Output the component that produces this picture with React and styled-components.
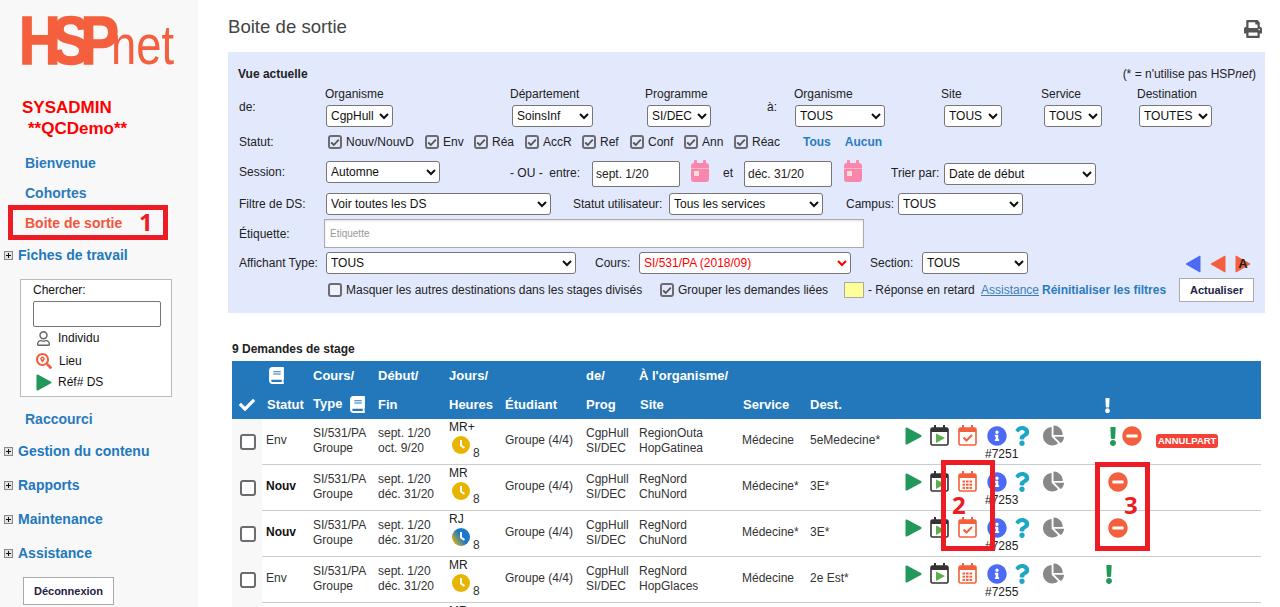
import React from 'react';
import styled, { createGlobalStyle } from 'styled-components';
import { FaPrint, FaBook, FaCheck, FaInfoCircle, FaQuestion, FaChartPie, FaMinusCircle, FaExclamation, FaRegUser, FaSearchLocation } from 'react-icons/fa';

const Global = createGlobalStyle`
  html, body { margin: 0; padding: 0; height: 100%; overflow: hidden; background: #fff; }
  body { font-family: "Liberation Sans", Arial, sans-serif; font-size: 12px; color: #222; }
  * { box-sizing: border-box; }
`;
const Page = styled.div`position: relative; display: flex; width: 1280px; height: 607px; overflow: hidden;`;

/* Sidebar */
const Sidebar = styled.aside`flex: none; width: 198px; height: 607px; background: #f8f8f8; display: flex; flex-direction: column;`;
const LogoSvg = styled.svg`display: block; flex: none; width: 198px; height: 97px;`;
const UserLine = styled.div`font-size: 17px; font-weight: 700; color: #f00; line-height: 21px; white-space: pre; padding-left: ${p => p.$pl}px;`;
const NavList = styled.nav`display: flex; flex-direction: column; margin-top: 9px;`;
const NavLink = styled.a`display: block; height: 30px; line-height: 30px; padding-left: 25px; font-size: 14px; font-weight: 700; color: ${p => p.$active ? '#f4553a' : '#2a7bbd'};`;
const NavGroup = styled.a`display: flex; align-items: center; height: 34px; padding-left: 4px; font-size: 14px; font-weight: 700; color: #2378bd;`;
const PlusBox = styled.span`position: relative; flex: none; width: 9px; height: 9px; margin-right: 5px; border: 1px solid #888; background: #e4e4e4;
  &::before { content: ''; position: absolute; left: 1px; right: 1px; top: 3px; height: 1px; background: #111; }
  &::after { content: ''; position: absolute; top: 1px; bottom: 1px; left: 3px; width: 1px; background: #111; }`;
const SearchBox = styled.div`width: 152px; height: 118px; margin: 7px 0 7px 20px; background: #fff; border: 1px solid #bbb; padding: 3px 0 0 12px; color: #111;`;
const SearchTitle = styled.div`line-height: 14px;`;
const SearchInput = styled.input`display: block; width: 128px; height: 26px; margin: 4px 0 0; border: 1px solid #767676; border-radius: 2px; background: #fff;`;
const SearchRow = styled.div`display: flex; align-items: center; height: ${p => p.$h}px; margin-top: ${p => p.$mt || 0}px; padding-left: 3px; svg { flex: none; } span { margin-left: ${p => p.$gap}px; }`;
const Logout = styled.button`flex: none; width: 91px; height: 28px; margin: 7px 0 0 23px; padding: 0; background: #fff; border: 1px solid #aaa; font: 700 11px "Liberation Sans", Arial, sans-serif; color: #224;`;

/* Main */
const Main = styled.main`flex: 1; min-width: 0; padding: 0 15px 0 30px;`;
const TitleBar = styled.header`display: flex; justify-content: space-between; align-items: flex-start; height: 52px;`;
const Title = styled.h1`margin: 16px 0 0; font-size: 18.6px; line-height: 22px; font-weight: 400; color: #444;`;
const PrintBtn = styled.span`margin: 20px 3px 0 0; color: #555; line-height: 0;`;

const Panel = styled.section`height: 261px; padding: 12px 0 0 10px; background: #e3e9fd; color: #222;`;
const Row = styled.div`display: flex; align-items: ${p => p.$align || 'center'}; height: ${p => p.$h}px; margin-top: ${p => p.$mt || 0}px; white-space: nowrap;`;
const Label = styled.span`flex: none; display: block; width: ${p => p.$w ? p.$w + 'px' : 'auto'}; margin-left: ${p => p.$ml || 0}px; line-height: ${p => p.$lh || 22}px; ${p => p.$strong && 'font-weight:700;'}`;
const Note = styled.span`margin-left: auto; margin-right: 9px; font-size: 12px;`;
const Field = styled.div`flex: none; width: ${p => p.$w}px; align-self: flex-start; padding-top: 3px;`;
const FieldLabel = styled.div`line-height: 14px; height: 18px;`;
const Picker = styled.select`flex: none; display: block; width: ${p => p.$w}px; height: 22px; margin-left: ${p => p.$ml || 0}px; margin-top: ${p => p.$mt || 0}px; padding: 0; font: 12px "Liberation Sans", Arial, sans-serif; color: ${p => p.$red ? '#f00' : '#111'}; background: #fff; border: 1px solid #767676; border-radius: 3px;`;
const DateInput = styled.input`flex: none; width: 88px; height: 26px; padding: 0 3px; border: 1px solid #767676; border-radius: 2px; font: 12px "Liberation Sans", Arial, sans-serif; color: #222;`;
const TagInput = styled.input`flex: none; width: 540px; height: 29px; padding: 0 5px; border: 1px solid #aaa; box-shadow: inset 0 1px 2px rgba(0,0,0,.12); font: 10px "Liberation Sans", Arial, sans-serif; &::placeholder { color: #999; }`;
const Tick = styled.span`flex: none; display: inline-flex; align-items: center; justify-content: center; width: ${p => p.$size || 14}px; height: ${p => p.$size || 14}px; border: 2px solid #6c6c70; border-radius: 3px; background: ${p => p.$bg || 'transparent'}; color: #555;`;
const TickItem = styled.label`flex: none; display: flex; align-items: center; width: ${p => p.$w}px; margin-left: ${p => p.$ml || 0}px;`;
const TickText = styled.span`margin-left: 4px;`;
const BlueLink = styled.a`flex: none; font-weight: 700; color: ${p => p.$plain ? '#3a7dba' : '#2a7bbd'}; margin-left: ${p => p.$ml || 0}px; ${p => p.$plain && 'font-weight:400; text-decoration: underline;'}`;
const PinkCal = styled.svg`flex: none; width: 18px; height: 22px; margin: -1px 0 0 ${p => p.$ml}px;`;
const Arrows = styled.div`flex: none; display: flex; gap: 9px; margin-left: 157px; margin-top: 2px; line-height: 0;`;
const Swatch = styled.span`flex: none; width: 20px; height: 16px; background: #ffff99; border: 1px solid #aaa;`;
const Refresh = styled.button`flex: none; width: 75px; height: 24px; margin-left: 13px; padding: 0; background: #fff; border: 1px solid #aaa; font: 700 11px "Liberation Sans", Arial, sans-serif; color: #224;`;

const Count = styled.div`margin: 29px 0 5px 4px; line-height: 14px; font-weight: 700; color: #222;`;
const Table = styled.table`margin-left: 4px; width: 1029px; table-layout: fixed; border-collapse: separate; border-spacing: 0; color: #333;`;
const Th = styled.th`height: 29px; padding: 0; background: #2378bb; color: #fff; font-size: 13px; font-weight: 700; text-align: left; white-space: nowrap; padding-left: ${p => p.$pl || 0}px; svg { vertical-align: middle; }`;
const HeadBook = styled(FaBook)`margin-left: 3px;`;
const BodyRow = styled.tr`height: 46px;`;
const Td = styled.td`padding: 0 0 2px ${p => p.$pl || 0}px; line-height: 14.7px; vertical-align: ${p => p.$top ? 'top' : 'middle'}; border-bottom: 1px solid #ccc; white-space: nowrap; ${p => p.$bold && 'font-weight:700; color:#111;'}`;
const CheckTd = styled.td`padding: 0 0 0 8px; background: #f8f8f8; vertical-align: middle; line-height: 0;`;
const DaysText = styled.div`line-height: 14px; margin-top: 1px; color: #222;`;
const Hours = styled.div`display: flex; align-items: flex-end; margin: 2px 0 0 3px; line-height: 12px; svg { flex: none; margin-right: 3px; } span { margin-bottom: -5px; }`;
const IconRow = styled.div`display: flex; align-items: center; height: 21px; margin-top: 6px; line-height: 0;`;
const Slot = styled.span`flex: none; display: inline-flex; justify-content: flex-start; align-items: center; width: ${p => p.$w}px; color: ${p => p.$c || 'inherit'};`;
const RefNo = styled.div`margin: 1px 0 0 80px; line-height: 14px; color: #222;`;
const WarnRow = styled.div`display: flex; align-items: center; height: 20px; margin-top: 7px; margin-left: ${p => p.$ml}px; line-height: 0;`;
const Badge = styled.span`display: inline-block; height: 14px; padding: 0 2px; background: #f44336; border-radius: 3px; color: #fff; font-size: 9.5px; line-height: 14px; font-weight: 700;`;

/* Annotation overlays */
const Frame = styled.div`position: absolute; left: ${p => p.$x}px; top: ${p => p.$y}px; width: ${p => p.$w}px; height: ${p => p.$h}px; border: 5px solid #ed1c24; pointer-events: none;`;
const Mark = styled.span`position: absolute; left: ${p => p.$x}px; top: ${p => p.$y}px; font: 700 24px/26px "Open Sans", sans-serif; color: #ed1c24;`;

const TickIcon = () => (
  <svg width="10" height="9" viewBox="0 0 10 9"><path d="M1.2 4.5 L3.8 7 L8.8 1.6" fill="none" stroke="#555" strokeWidth="1.8" /></svg>
);
const Checked = ({ label, w }) => <TickItem $w={w}><Tick><TickIcon /></Tick><TickText>{label}</TickText></TickItem>;

const Triangle = ({ w = 17, h = 18 }) => (
  <svg width={w} height={h} viewBox="0 0 17 18"><path d="M1.5 1.5 L15.5 9 L1.5 16.5 Z" fill="#22995a" stroke="#22995a" strokeWidth="2" strokeLinejoin="round" /></svg>
);

const Cal = ({ kind }) => {
  const c = kind === 'play' ? '#333' : '#f4603e';
  return (
    <svg width="19" height="21" viewBox="0 0 19 21">
      <rect x="1" y="3" width="17" height="17" rx="1.5" fill="#fff" stroke={c} strokeWidth="1.6" />
      <rect x="1" y="3" width="17" height="4" fill={c} />
      <rect x="4" y="0" width="2" height="4" fill={c} />
      <rect x="13" y="0" width="2" height="4" fill={c} />
      {kind === 'play' && <path d="M6 8.5 L15 13 L6 18 Z" fill="#5cb04a" />}
      {kind === 'check' && <path d="M5.5 12.5 L8.5 15.5 L14 10" fill="none" stroke={c} strokeWidth="2" />}
      {kind === 'grid' && [9.5, 12.7, 15.9].map(y => [4.5, 8, 11.5].map(x => <rect key={x + '-' + y} x={x} y={y} width="2.6" height="2" fill={c} />))}
    </svg>
  );
};

const Clock = ({ blue, id }) => (
  <svg width="18" height="18" viewBox="0 0 18 18">
    {blue && <defs><linearGradient id={id} x1="0" y1="1" x2="1" y2="0.3"><stop offset="0.1" stopColor="#e9b400" /><stop offset="0.6" stopColor="#1c78c8" /></linearGradient></defs>}
    <circle cx="9" cy="9" r="9" fill={blue ? `url(#${id})` : '#e9b400'} />
    <path d="M9 4 V9.5 L12.5 12" fill="none" stroke="#fff" strokeWidth="2" />
  </svg>
);

const TriLeft = ({ c }) => (
  <svg width="16" height="18" viewBox="0 0 16 18"><path d="M15 1 V17 L1 9 Z" fill={c} stroke={c} strokeWidth="1" strokeLinejoin="round" /></svg>
);
const TriA = () => (
  <svg width="16" height="18" viewBox="0 0 16 18">
    <path d="M1 1 V17 L15 9 Z" fill="#f4603e" stroke="#f4603e" strokeWidth="1" strokeLinejoin="round" />
    <text x="8" y="13" textAnchor="middle" fontFamily="Liberation Sans" fontWeight="700" fontSize="13" fill="#222">A</text>
  </svg>
);
const PinkIcon = ({ ml }) => (
  <PinkCal $ml={ml} viewBox="0 0 18 22">
    <rect x="0" y="3" width="18" height="19" rx="3" fill="#f986ad" />
    <rect x="3" y="0" width="3" height="5" rx="1" fill="#f986ad" />
    <rect x="12" y="0" width="3" height="5" rx="1" fill="#f986ad" />
    <rect x="0" y="8" width="18" height="1" fill="#fbb" />
    <rect x="3" y="11" width="5" height="5" fill="#fdd" />
  </PinkCal>
);

const rows = [
  { st: 'Env', d: ['sept. 1/20', 'oct. 9/20'], days: 'MR+', site: ['RegionOuta', 'HopGatinea'], sv: 'Médecine', dest: '5eMedecine*', cal: 'check', ref: '#7251', warn: ['bang', 'minus'], badge: true },
  { st: 'Nouv', b: true, d: ['sept. 1/20', 'déc. 31/20'], days: 'MR', site: ['RegNord', 'ChuNord'], sv: 'Médecine*', dest: '3E*', cal: 'grid', ref: '#7253', warn: ['minus'] },
  { st: 'Nouv', b: true, d: ['sept. 1/20', 'déc. 31/20'], days: 'RJ', blue: true, site: ['RegNord', 'ChuNord'], sv: 'Médecine*', dest: '3E*', cal: 'check', ref: '#7285', warn: ['minus'] },
  { st: 'Env', d: ['sept. 1/20', 'déc. 31/20'], days: 'MR', site: ['RegNord', 'HopGlaces'], sv: 'Médecine', dest: '2e Est*', cal: 'grid', ref: '#7255', warn: ['bang'] },
];
const widths = [30, 51, 65, 71, 56, 81, 53, 103, 68, 95, 195, 56, 105];
const Two = ({ a, b }) => <>{a}<br />{b}</>;

export default function App() {
  return (
    <Page>
      <Global />
      <Sidebar>
        <LogoSvg viewBox="0 0 198 97">
          <text transform="translate(19 64) scale(.85 1)" fontFamily="Liberation Sans" fontWeight="700" fontSize="68" letterSpacing="-11" fill="#f4603e" stroke="#f4603e" strokeWidth="1.5">HSP</text>
          <text x="111" y="64" fontFamily="Liberation Sans" fontSize="56" fill="#f4603e" textLength="63" lengthAdjust="spacingAndGlyphs">net</text>
        </LogoSvg>
        <UserLine $pl={22}>SYSADMIN</UserLine>
        <UserLine $pl={28}>**QCDemo**</UserLine>
        <NavList>
          <NavLink>Bienvenue</NavLink>
          <NavLink>Cohortes</NavLink>
          <NavLink $active>Boite de sortie</NavLink>
          <NavGroup><PlusBox />Fiches de travail</NavGroup>
          <SearchBox>
            <SearchTitle>Chercher:</SearchTitle>
            <SearchInput />
            <SearchRow $h={20} $mt={1} $gap={7}><FaRegUser size={15} color="#666" /><span>Individu</span></SearchRow>
            <SearchRow $h={26} $gap={7}><FaSearchLocation size={16} color="#f4603e" /><span>Lieu</span></SearchRow>
            <SearchRow $h={16} $gap={6}><Triangle w={16} h={17} /><span>Réf# DS</span></SearchRow>
          </SearchBox>
          <NavLink>Raccourci</NavLink>
          <NavGroup><PlusBox />Gestion du contenu</NavGroup>
          <NavGroup><PlusBox />Rapports</NavGroup>
          <NavGroup><PlusBox />Maintenance</NavGroup>
          <NavGroup><PlusBox />Assistance</NavGroup>
        </NavList>
        <Logout>Déconnexion</Logout>
      </Sidebar>

      <Main>
        <TitleBar>
          <Title>Boite de sortie</Title>
          <PrintBtn><FaPrint size={18} /></PrintBtn>
        </TitleBar>

        <Panel>
          <Row $h={20}>
            <Label $strong>Vue actuelle</Label>
            <Note>(* = n'utilise pas HSP<i>net</i>)</Note>
          </Row>
          <Row $h={46}>
            <Label $ml={1} $w={86}>de:</Label>
            <Field $w={185}><FieldLabel>Organisme</FieldLabel><Picker $w={67} $ml={1}><option>CgpHull</option></Picker></Field>
            <Field $w={135}><FieldLabel>Département</FieldLabel><Picker $w={81} $ml={2}><option>SoinsInf</option></Picker></Field>
            <Field $w={122}><FieldLabel>Programme</FieldLabel><Picker $w={64} $ml={2}><option>SI/DEC</option></Picker></Field>
            <Label $w={27}>à:</Label>
            <Field $w={147}><FieldLabel>Organisme</FieldLabel><Picker $w={90} $ml={1}><option>TOUS</option></Picker></Field>
            <Field $w={100}><FieldLabel>Site</FieldLabel><Picker $w={58} $ml={3}><option>TOUS</option></Picker></Field>
            <Field $w={96}><FieldLabel>Service</FieldLabel><Picker $w={58} $ml={3}><option>TOUS</option></Picker></Field>
            <Field $w={90}><FieldLabel>Destination</FieldLabel><Picker $w={73} $ml={2}><option>TOUTES</option></Picker></Field>
          </Row>
          <Row $h={24}>
            <Label $ml={1} $w={89}>Statut:</Label>
            <Checked label="Nouv/NouvD" w={97} />
            <Checked label="Env" w={49} />
            <Checked label="Réa" w={51} />
            <Checked label="AccR" w={57} />
            <Checked label="Ref" w={48} />
            <Checked label="Conf" w={54} />
            <Checked label="Ann" w={50} />
            <Checked label="Réac" w={69} />
            <BlueLink>Tous</BlueLink>
            <BlueLink $ml={14}>Aucun</BlueLink>
          </Row>
          <Row $h={26} $mt={7} $align="flex-start">
            <Label $ml={1} $w={87}>Session:</Label>
            <Picker $w={114}><option>Automne</option></Picker>
            <Label $ml={70} $w={82} $lh={25}>- OU -&nbsp; entre:</Label>
            <DateInput defaultValue="sept. 1/20" />
            <PinkIcon ml={11} />
            <Label $ml={14} $w={21} $lh={25}>et</Label>
            <DateInput defaultValue="déc. 31/20" />
            <PinkIcon ml={12} />
            <Label $ml={29} $w={53} $lh={25}>Trier par:</Label>
            <Picker $w={152} $mt={2}><option>Date de début</option></Picker>
          </Row>
          <Row $h={22} $mt={6}>
            <Label $ml={1} $w={87}>Filtre de DS:</Label>
            <Picker $w={225}><option>Voir toutes les DS</option></Picker>
            <Label $ml={22} $w={96}>Statut utilisateur:</Label>
            <Picker $w={154}><option>Tous les services</option></Picker>
            <Label $ml={23} $w={52}>Campus:</Label>
            <Picker $w={125}><option>TOUS</option></Picker>
          </Row>
          <Row $h={29} $mt={4}>
            <Label $ml={1} $w={85} $lh={26}>Étiquette:</Label>
            <TagInput placeholder="Étiquette" />
          </Row>
          <Row $h={22} $mt={4}>
            <Label $ml={1} $w={87}>Affichant Type:</Label>
            <Picker $w={250}><option>TOUS</option></Picker>
            <Label $ml={19} $w={44}>Cours:</Label>
            <Picker $w={212} $red><option>SI/531/PA (2018/09)</option></Picker>
            <Label $ml={19} $w={52}>Section:</Label>
            <Picker $w={106}><option>TOUS</option></Picker>
            <Arrows><TriLeft c="#4d6af5" /><TriLeft c="#f4603e" /><TriA /></Arrows>
          </Row>
          <Row $h={24} $mt={4}>
            <TickItem $ml={90} $w={332}><Tick $bg="#eef1fb" /><TickText>Masquer les autres destinations dans les stages divisés</TickText></TickItem>
            <TickItem $w={184}><Tick><TickIcon /></Tick><TickText>Grouper les demandes liées</TickText></TickItem>
            <Swatch />
            <Label $ml={4} $w={113}>- Réponse en retard</Label>
            <BlueLink $plain>Assistance</BlueLink>
            <BlueLink $ml={3}>Réinitialiser les filtres</BlueLink>
            <Refresh>Actualiser</Refresh>
          </Row>
        </Panel>

        <Count>9 Demandes de stage</Count>
        <Table>
          <colgroup>{widths.map((w, i) => <col key={i} width={w} />)}</colgroup>
          <thead>
            <tr>
              <Th />
              <Th $pl={6}><FaBook size={17} /></Th>
              <Th>Cours/</Th><Th>Début/</Th><Th>Jours/</Th><Th />
              <Th>de/</Th><Th>À l'organisme/</Th><Th /><Th /><Th /><Th /><Th />
            </tr>
            <tr>
              <Th $pl={7}><FaCheck size={16} /></Th>
              <Th $pl={5}>Statut</Th>
              <Th>Type <HeadBook size={17} /></Th>
              <Th>Fin</Th><Th>Heures</Th><Th>Étudiant</Th><Th>Prog</Th><Th $pl={1}>Site</Th><Th $pl={1}>Service</Th><Th>Dest.</Th><Th />
              <Th><FaExclamation size={15} /></Th><Th />
            </tr>
          </thead>
          <tbody>
            {rows.map((r, i) => (
              <BodyRow key={i}>
                <CheckTd><Tick $size={16} $bg="#fff" /></CheckTd>
                <Td $pl={4} $bold={r.b}>{r.st}</Td>
                <Td><Two a="SI/531/PA" b="Groupe" /></Td>
                <Td><Two a={r.d[0]} b={r.d[1]} /></Td>
                <Td $top>
                  <DaysText>{r.days}</DaysText>
                  <Hours><Clock blue={r.blue} id={'g' + i} /><span>8</span></Hours>
                </Td>
                <Td>Groupe (4/4)</Td>
                <Td><Two a="CgpHull" b="SI/DEC" /></Td>
                <Td><Two a={r.site[0]} b={r.site[1]} /></Td>
                <Td>{r.sv}</Td>
                <Td>{r.dest}</Td>
                <Td $top>
                  <IconRow>
                    <Slot $w={25}><Triangle /></Slot>
                    <Slot $w={28}><Cal kind="play" /></Slot>
                    <Slot $w={29}><Cal kind={r.cal} /></Slot>
                    <Slot $w={25} $c="#4d6af5"><FaInfoCircle size={20} /></Slot>
                    <Slot $w={31} $c="#1ea7c4"><FaQuestion size={20} /></Slot>
                    <Slot $w={22} $c="#888"><FaChartPie size={21} /></Slot>
                  </IconRow>
                  <RefNo>{r.ref}</RefNo>
                </Td>
                <Td $top>
                  <WarnRow $ml={r.warn[0] === 'bang' ? 4 : 8}>
                    {r.warn.map(w => w === 'bang'
                      ? <Slot key={w} $w={r.warn.length > 1 ? 18 : 10} $c="#22995a"><FaExclamation size={19} /></Slot>
                      : <Slot key={w} $w={20} $c="#f4603e"><FaMinusCircle size={20} /></Slot>)}
                  </WarnRow>
                </Td>
                <Td>{r.badge && <Badge>ANNULPART</Badge>}</Td>
              </BodyRow>
            ))}
            <BodyRow>
              <CheckTd /><Td /><Td /><Td />
              <Td $top><DaysText>MR</DaysText></Td>
              <Td /><Td /><Td /><Td /><Td /><Td /><Td /><Td />
            </BodyRow>
          </tbody>
        </Table>
      </Main>

      <Frame $x={8} $y={205} $w={160} $h={35} />
      <Mark $x={139} $y={209}>1</Mark>
      <Frame $x={941} $y={460} $w={54} $h={91} />
      <Mark $x={952} $y={492}>2</Mark>
      <Frame $x={1095} $y={462} $w={55} $h={89} />
      <Mark $x={1124} $y={492}>3</Mark>
    </Page>
  );
}
